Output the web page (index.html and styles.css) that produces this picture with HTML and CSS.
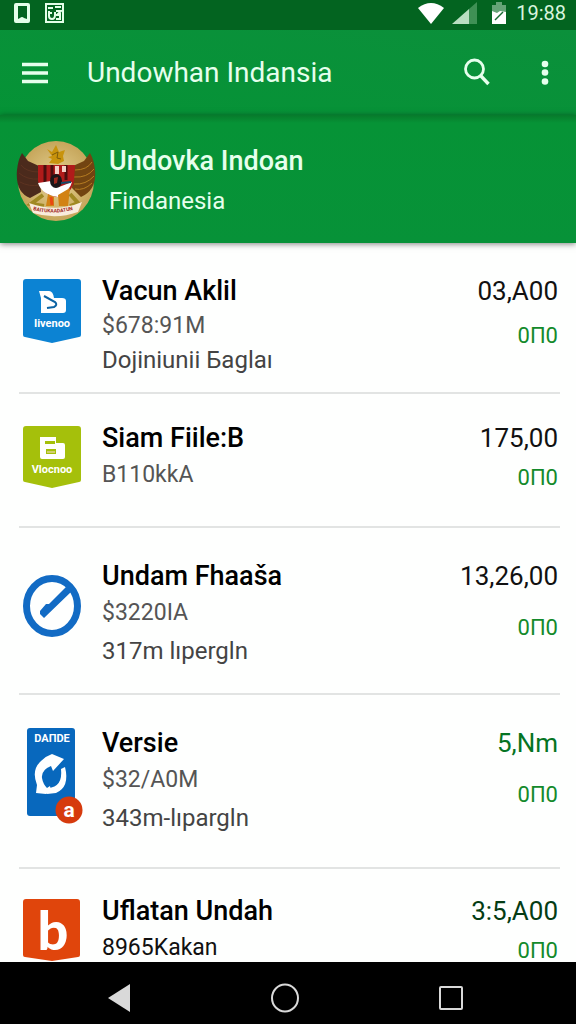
FILE: index.html
```
<!DOCTYPE html>
<html lang="id">
  <head>
    <meta charset="utf-8">
    <meta name="viewport" content="width=device-width, initial-scale=1">
    <title>Undowhan Indansia</title>
    <link rel="stylesheet" href="styles.css">
  </head>
  <body>
    <div class="statusbar">
      <svg width="16" height="20" viewBox="0 0 16 20"><path fill="#e4ffe9" fill-rule="evenodd" d="M2 0h12q2 0 2 2v16q0 2-2 2H2q-2 0-2-2V2q0-2 2-2zM4 3v13l2-1q2-2 4 0l3 1V3z"/></svg>
      <svg width="19" height="20" viewBox="0 0 19 20"><rect x="1" y="1" width="17" height="18" fill="none" stroke="#e4ffe9" stroke-width="2"/><path d="M3 5h5M10 4h6M4 8v5q0 3 3 3t3-4V9M11 8h5l-3 3h3M11 12h4v4h-4M4 10h3" fill="none" stroke="#e4ffe9" stroke-width="2"/></svg>
      <div class="system">
        <svg width="26" height="21" viewBox="0 0 26 21"><path fill="#fff" d="M0 5Q13-5 26 5L13 21z"/></svg>
        <svg class="signal" width="25" height="22" viewBox="0 0 25 22"><path fill="#b9dfc1" d="M0 22L17 7v15z"/><path fill="#3f9055" d="M17 7l8-7v22h-8z"/></svg>
        <svg class="battery" width="14" height="22" viewBox="0 0 14 22"><path fill="#65a477" d="M0 3h4V0h6v3h4v8H0z"/><path fill="#fff" d="M0 9l5 2 3-2 6 1v12H0z"/><path d="M3 18l8-8" stroke="#176b30" stroke-width="1.5"/></svg>
        <span class="time">19:88</span>
      </div>
    </div>

    <header class="toolbar">
      <button class="icon-button" aria-label="Menu">
        <svg width="26" height="22" viewBox="0 0 26 22"><path d="M0 2.5h26M0 11h26M0 19.5h26" stroke="#e6ffed" stroke-width="3.4"/></svg>
      </button>
      <h1>Undowhan Indansia</h1>
      <button class="icon-button" aria-label="Search">
        <svg width="28" height="30" viewBox="0 0 28 30" fill="none" stroke="#e6ffed"><circle cx="11.5" cy="11" r="9" stroke-width="2.8"/><path d="M17.5 17.5l8 8.5" stroke-width="3.4"/></svg>
      </button>
      <button class="icon-button more" aria-label="More">
        <svg width="8" height="26" viewBox="0 0 8 26" fill="#e6ffed"><circle cx="4" cy="4" r="3.3"/><circle cx="4" cy="12.5" r="3.3"/><circle cx="4" cy="21.5" r="3.3"/></svg>
      </button>
    </header>

    <section class="profile">
      <svg class="emblem" width="80" height="82" viewBox="0 0 80 82">
        <defs>
          <radialGradient id="gold"><stop offset="0" stop-color="#e6d394"/><stop offset="1" stop-color="#c6a65b"/></radialGradient>
        </defs>
        <ellipse cx="40" cy="41" rx="38" ry="40" fill="url(#gold)"/>
        <path d="M6 13l6 8 11 5 2 26-11 6Q-1 52 1 30 2 20 6 13z" fill="#4b2a1c"/>
        <path d="M74 13l-6 8-11 5-1 22 9 9Q81 50 79 30 78 20 74 13z" fill="#724411"/>
        <path d="M5 25q5 7 18 7M3 33q8 7 20 6M4 42q9 5 20 3" stroke="#5d3321" fill="none"/>
        <path d="M76 22q-5 8-17 8M78 29q-7 9-20 8M78 36q-8 9-20 8M76 43q-8 8-17 6" stroke="#b57c22" fill="none"/>
        <path d="M31 9l5 3 4-7 3 7 6-2-2 6 1 5-6 3-9-1 3-4-4-2 4-1z" fill="#c8930c"/>
        <path d="M36 15l6-3-1 6 4 1" stroke="#7c5b0a" fill="none"/>
        <path d="M22 25h37l-1 16q-3 15-18 16Q25 54 22 41z" fill="#b01b1a"/>
        <path d="M29 25v18M36 25v14M50 25v15" stroke="#4a0f0e" stroke-width="3"/>
        <path d="M39 26h4v8h-4zM46 26h4v6h-4z" fill="#f3cfc6"/>
        <path d="M22 43l13-2 8 6 13-5q-2 9-14 15-16-2-20-14z" fill="#fff"/>
        <ellipse cx="40" cy="41" rx="6" ry="7" fill="#1b1518"/>
        <path d="M38 38l4-1-1 6-3 1z" fill="#9c281d"/>
        <path d="M45 43l10-1" stroke="#174b6a" stroke-width="2"/>
        <path d="M32 54l6 3v9h-8zM42 55l12-7-2 18h-9z" fill="#d28214"/>
        <path d="M35 57l1 8" stroke="#e94712" stroke-width="3"/>
        <path d="M27 55l-12 9 13 2M54 54l8 9-8 3" fill="none" stroke="#a08923" stroke-width="4"/>
        <path d="M13 63q27 10 53-1l-4 10q-22 8-45 1z" fill="#f9ecdc"/>
        <path id="ribbon" d="M17 70q23 6 46-2" fill="none"/>
        <text class="ribbon-text"><textPath href="#ribbon">BAITUKAADATUN</textPath></text>
      </svg>
      <div>
        <h2>Undovka Indoan</h2>
        <p>Findanesia</p>
      </div>
    </section>

    <main>
      <ul class="list">
        <li class="row">
          <div class="logo">
            <svg width="58" height="64" viewBox="0 0 58 64">
              <path fill="#0c83d3" d="M3 0h52q3 0 3 3v53q0 2-2 2L29 64 2 58q-2 0-2-2V3q0-3 3-3z"/>
              <path fill="#fff" d="M16 12h10q4 0 5 7h8q4 0 4 3v9q0 3-3 3H18V19z"/>
              <path d="M21 17l11 6q3 3-1 5l-7 1" fill="none" stroke="#0c63a3" stroke-width="2"/>
              <text x="29" y="48" class="logo-text">Iivenoo</text>
            </svg>
          </div>
          <div class="info">
            <h3>Vacun Aklil</h3>
            <p>$678:91M</p>
            <p class="detail">Dojiniunii Бaglaı</p>
          </div>
          <div class="amount"><strong>03,A00</strong><span>0П0</span></div>
        </li>
        <li class="row short">
          <div class="logo">
            <svg width="58" height="62" viewBox="0 0 58 62">
              <path fill="#a5c00b" d="M3 0h52q3 0 3 3v51q0 2-2 2L29 62 2 56q-2 0-2-2V3q0-3 3-3z"/>
              <path fill="#fff" fill-rule="evenodd" d="M17 11h16v6h7q2 0 2 2v12q0 2-2 2H19q-2 0-2-2zM22 15v3h10v-3zM23 23v5h10v-5z"/>
              <path fill="#d1cf70" d="M24 25h8v2h-8z"/>
              <text x="29" y="47" class="logo-text">Vlocnoo</text>
            </svg>
          </div>
          <div class="info">
            <h3>Siam Fiile:B</h3>
            <p>B110kkA</p>
          </div>
          <div class="amount"><strong>175,00</strong><span>0П0</span></div>
        </li>
        <li class="row tall">
          <div class="logo round">
            <svg width="58" height="62" viewBox="0 0 58 62">
              <ellipse cx="29" cy="31" rx="25.5" ry="27.5" fill="none" stroke="#126bc4" stroke-width="7"/>
              <path fill="#126bc4" d="M43 12l6 4-28 27-4-4v-3l6-7h3z"/>
            </svg>
          </div>
          <div class="info">
            <h3>Undam Fhaaša</h3>
            <p>$3220IA</p>
            <p class="detail">317m lıpergln</p>
          </div>
          <div class="amount"><strong>13,26,00</strong><span>0П0</span></div>
        </li>
        <li class="row tall">
          <div class="logo card">
            <svg width="60" height="97" viewBox="0 0 60 97">
              <rect x="4" width="48" height="88" rx="3" fill="#0868bd"/>
              <text x="29" y="14" class="logo-text">DAПDE</text>
              <path fill="#fff" d="M13 65l1-8Q8 42 18 33q5-5 11-7l12 5-11 12-2-5Q18 42 19 50q1 6 5 10l3-2 1 6-5 2z"/>
              <path fill="#fff" d="M38 41l4-2q5 20-9 26l-9 1 1-6q15-1 13-19z"/>
              <circle cx="46" cy="82" r="13.5" fill="#d63b0d"/>
              <text x="46" y="89" class="badge-text">a</text>
            </svg>
          </div>
          <div class="info">
            <h3>Versie</h3>
            <p>$32/A0M</p>
            <p class="detail">343m-lıpargln</p>
          </div>
          <div class="amount green"><strong>5,Nm</strong><span>0П0</span></div>
        </li>
        <li class="row short">
          <div class="logo">
            <svg width="58" height="62" viewBox="0 0 58 62">
              <path fill="#e0450c" d="M3 0h51q3 0 3 3v53q0 2-2 2L29 62 2 58q-2 0-2-2V3q0-3 3-3z"/>
              <text x="30" y="51" class="logo-letter">b</text>
            </svg>
          </div>
          <div class="info">
            <h3>Uflatan Undah</h3>
            <p class="dark">8965Kakan</p>
          </div>
          <div class="amount dark-green"><strong>3:5,A00</strong><span>0П0</span></div>
        </li>
      </ul>
    </main>

    <nav class="navbar">
      <button aria-label="Back"><svg width="22" height="28" viewBox="0 0 22 28"><path d="M22 0v28L0 14z" fill="#d9d9d9"/></svg></button>
      <button aria-label="Home"><svg width="28" height="30" viewBox="0 0 28 30"><ellipse cx="14" cy="15" rx="13" ry="13.5" fill="none" stroke="#d9d9d9" stroke-width="2"/></svg></button>
      <button aria-label="Recent apps"><svg width="24" height="26" viewBox="0 0 24 26"><rect x="1" y="2" width="22" height="22" rx="1" fill="none" stroke="#d9d9d9" stroke-width="2"/></svg></button>
    </nav>
  </body>
</html>
```
FILE: styles.css
```
* { box-sizing: border-box; }
body {
  margin: 0;
  height: 100vh;
  display: flex;
  flex-direction: column;
  overflow: hidden;
  font-family: Roboto, "Liberation Sans", sans-serif;
  background: #fefffe;
  color: #111;
}
h1, h2, h3, p, ul { margin: 0; padding: 0; }
svg { display: block; flex: none; }
button {
  border: 0;
  padding: 0;
  background: none;
  display: flex;
  align-items: center;
  justify-content: center;
}

.statusbar {
  flex: none;
  height: 30px;
  padding: 0 10px 4px 14px;
  display: flex;
  align-items: center;
  gap: 15px;
  background: #036420;
}
.system {
  margin-left: auto;
  display: flex;
  align-items: center;
}
.signal { margin-left: 8px; }
.battery { margin: 0 10px 0 15px; }
.time {
  font-size: 20px;
  line-height: 24px;
  color: #d9f5df;
}

.toolbar {
  flex: none;
  height: 85px;
  padding: 0 11px 0 15px;
  display: flex;
  align-items: center;
  background: linear-gradient(to top right, #059336, #0b903b);
  color: #e6ffed;
}
.toolbar h1 {
  flex: 1;
  margin-left: 32px;
  font-size: 28px;
  line-height: 36px;
  font-weight: 400;
}
.icon-button { width: 40px; height: 48px; }
.more { margin-left: 28px; }

.profile {
  flex: none;
  height: 128px;
  padding: 4px 16px 0;
  display: flex;
  align-items: center;
  gap: 13px;
  background: linear-gradient(#077a2b, #069336 8px, #079238);
  color: #e6ffed;
  box-shadow: 0 1px 6px rgba(0, 0, 0, .5);
  z-index: 1;
}
.profile h2 {
  font-size: 27px;
  line-height: 40px;
  font-weight: 500;
}
.profile p {
  font-size: 24px;
  line-height: 40px;
}
.ribbon-text {
  font-size: 5px;
  font-weight: 700;
  fill: #a02722;
}

main {
  flex: 1;
  min-height: 0;
  overflow: hidden;
}
.list {
  list-style: none;
  padding: 0 16px 0 19px;
}
.row {
  min-height: 151px;
  padding: 30px 2px 0 4px;
  display: flex;
  border-bottom: 2px solid #e2e4e3;
}
.logo {
  width: 79px;
  padding-top: 6px;
}
.info { flex: 1; }
.info h3 {
  font-size: 27px;
  line-height: 36px;
  font-weight: 500;
  color: #000;
}
.info p {
  font-size: 23px;
  line-height: 34px;
  color: #555;
}
.info .detail {
  font-size: 24px;
  color: #444;
}
.info .dark { color: #111; }
.amount {
  display: flex;
  flex-direction: column;
  align-items: flex-end;
  gap: 11px;
}
.amount strong {
  font-size: 26px;
  line-height: 36px;
  font-weight: 400;
}
.amount span {
  font-size: 22px;
  line-height: 32px;
  color: #138a2b;
}
.green strong { color: #057423; }
.dark-green strong { color: #043c14; }

.short {
  min-height: 134px;
  padding-top: 26px;
}
.short .info p { line-height: 38px; }
.short .amount { gap: 6px; }
.tall { min-height: 167px; }
.tall + .tall { min-height: 174px; }
.tall .info p { line-height: 38px; }
.tall .amount { gap: 18px; }
.round { padding-top: 17px; }
.card { padding-top: 3px; }
.row:last-child { padding-top: 24px; }

.logo-text {
  font-size: 11px;
  font-weight: 700;
  text-anchor: middle;
  fill: #fff;
}
.badge-text {
  font-size: 21px;
  font-weight: 700;
  text-anchor: middle;
  fill: #fff;
}
.logo-letter {
  font-family: Lato, sans-serif;
  font-size: 54px;
  font-weight: 900;
  text-anchor: middle;
  fill: #fff;
}

.navbar {
  flex: none;
  height: 62px;
  padding: 10px 42px 0 36px;
  display: flex;
  justify-content: space-around;
  background: #000;
}
.navbar button { width: 48px; height: 52px; }
```
